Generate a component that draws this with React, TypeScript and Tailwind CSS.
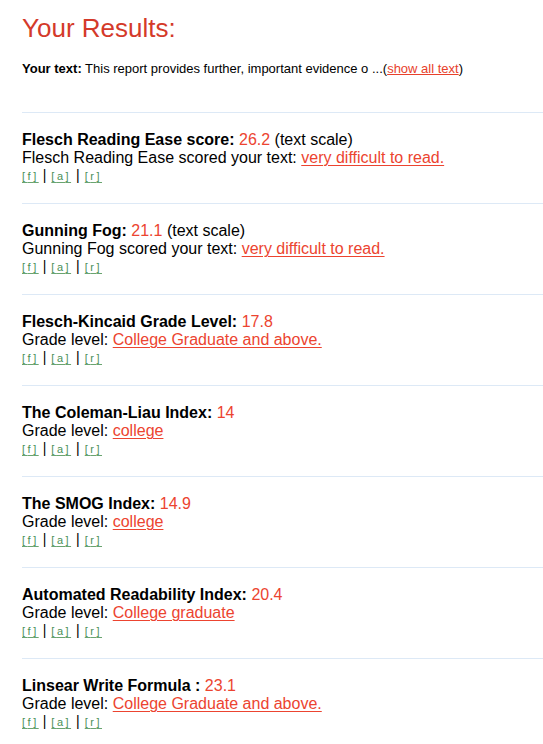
import React from "react";

const sections = [
  { title: "Flesch Reading Ease score:", value: "26.2", extra: " (text scale)", label: "Flesch Reading Ease scored your text: ", link: "very difficult to read." },
  { title: "Gunning Fog:", value: "21.1", extra: " (text scale)", label: "Gunning Fog scored your text: ", link: "very difficult to read." },
  { title: "Flesch-Kincaid Grade Level:", value: "17.8", extra: "", label: "Grade level: ", link: "College Graduate and above." },
  { title: "The Coleman-Liau Index:", value: "14", extra: "", label: "Grade level: ", link: "college" },
  { title: "The SMOG Index:", value: "14.9", extra: "", label: "Grade level: ", link: "college" },
  { title: "Automated Readability Index:", value: "20.4", extra: "", label: "Grade level: ", link: "College graduate" },
  { title: "Linsear Write Formula :", value: "23.1", extra: "", label: "Grade level: ", link: "College Graduate and above." },
];

function Small({ t }: { t: string }) {
  return (
    <span className="text-[11px] tracking-[2.5px] text-[#4a9058] underline underline-offset-2 decoration-[#6aa470]">[{t}]</span>
  );
}

export default function App() {
  return (
    <div className="bg-white min-h-[744px] pl-[22px] text-black" style={{ fontFamily: '"Liberation Sans", Arial, sans-serif' }}>
      <h1 className="text-[26px] leading-[30px] text-[#d43a2a] pt-[13px]">Your Results:</h1>
      <p className="text-[13px] leading-[14px] mt-[19px]">
        <b>Your text:</b> This report provides further, important evidence o ...(
        <span className="text-[#e8412c] underline">show all text</span>)
      </p>
      <div className="mt-[36px]">
        {sections.map((s, i) => (
          <div key={i} className="border-t border-[#dde9f6] pt-[18px] pb-[18px]">
            <div className="text-[16px] leading-[18px]">
              <b>{s.title}</b> <span className="text-[#ec4430]">{s.value}</span>
              {s.extra}
            </div>
            <div className="text-[16px] leading-[18px]">
              {s.label}
              <span className="text-[#ec4430] underline decoration-1 underline-offset-2">{s.link}</span>
            </div>
            <div className="leading-[18px] h-[18px] flex items-center">
              <Small t="f" />
              <span className="text-[14px] leading-[14px] ml-[4px] mr-[5px] -mt-[3px]">|</span>
              <Small t="a" />
              <span className="text-[14px] leading-[14px] ml-[5px] mr-[5px] -mt-[3px]">|</span>
              <Small t="r" />
            </div>
          </div>
        ))}
      </div>
    </div>
  );
}
